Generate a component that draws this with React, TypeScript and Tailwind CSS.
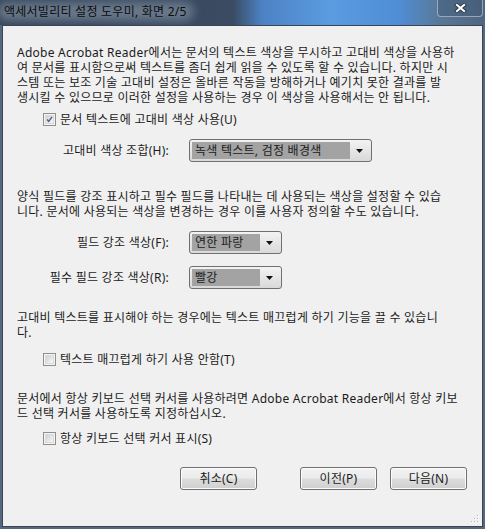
import React from 'react';

const font = "font-['Noto_Sans','Noto_Sans_CJK_KR',sans-serif]";

const Checkbox = ({ checked, label }: { checked?: boolean; label: string }) => (
  <div className="flex items-center h-[15px] pl-[26px]">
    <div className="w-[13px] h-[13px] border border-[#8e8f8f] bg-[#f4f4f4] p-[1px]">
      <div className="relative w-full h-full bg-[linear-gradient(135deg,#cdd1d6,#f7f7f7)] border border-[#dadada]">
        {checked && (
          <svg viewBox="0 0 9 9" className="absolute inset-0 w-full h-full">
            <path d="M1.5 4.5 L3.5 7 L7.8 1.2" fill="none" stroke="#4b5f86" strokeWidth="1.7" />
          </svg>
        )}
      </div>
    </div>
    <span className="ml-[4px] whitespace-nowrap">{label}</span>
  </div>
);

const Select = ({ value, width }: { value: string; width: string }) => (
  <div className={`flex h-[23px] ${width} rounded-[3px] border border-[#707070] bg-[linear-gradient(#f3f3f3,#e6e6e6_50%,#d9d9d9)] p-[2px]`}>
    <div className="flex-1 bg-[#a3a3a3] flex items-center pl-[3px] whitespace-nowrap">{value}</div>
    <div className="w-[19px] flex items-center justify-center">
      <svg width="7" height="4" viewBox="0 0 7 4">
        <path d="M0 0 H7 L3.5 4 Z" fill="#111" />
      </svg>
    </div>
  </div>
);

const FieldRow = ({ label, children }: { label: string; children: React.ReactNode }) => (
  <div className="flex items-center">
    <div className="w-[152px] text-right whitespace-nowrap">{label}</div>
    <div className="ml-[20px]">{children}</div>
  </div>
);

const Button = ({ label }: { label: string }) => (
  <button className="w-[77px] h-[23px] rounded-[3px] border border-[#707070] bg-[linear-gradient(#f2f2f2_0%,#ebebeb_48%,#dddddd_52%,#cfcfcf_100%)] text-[12px] text-[#1b1b1b] shadow-[inset_0_0_0_1px_#fcfcfc]">
    {label}
  </button>
);

export default function App() {
  return (
    <div className={`${font} w-[485px] h-[529px] flex flex-col bg-[#56687d] text-[12px] leading-[15px] tracking-[0.25px] text-[#1b1b1b]`}>
      {/* Title bar */}
      <div className="relative h-[25px] flex items-start bg-[linear-gradient(90deg,#34445a_0%,#3a4b62_48%,#4c82c4_54%,#5b9be0_68%,#4f8ed6_82%,#5a7796_91%,#4f6580_100%)]">
        <div className="relative mt-[4px] ml-[3px] px-[1px]">
          <div className="absolute -inset-x-[6px] -inset-y-[2px] rounded-full bg-[#9aa7b6]/50 blur-[5px]" />
          <span className="relative whitespace-nowrap text-[#0d0d0d]">액세서빌리티 설정 도우미, 화면 2/5</span>
        </div>
        <div className="absolute right-[2px] top-0 w-[46px] h-[17px] rounded-b-[4px] border border-t-0 border-[#b8c4d4]/70 bg-[#3b5470]/40 flex items-center justify-center">
          <svg width="13" height="10" viewBox="0 0 13 10">
            <path d="M3 2 L10 8 M10 2 L3 8" stroke="#2a3644" strokeWidth="4" strokeLinecap="square" />
            <path d="M3 2 L10 8 M10 2 L3 8" stroke="#ffffff" strokeWidth="2.2" strokeLinecap="square" />
          </svg>
        </div>
      </div>

      {/* Client area */}
      <div className="relative flex-1 mx-[2px] mb-[2px] border border-[#3b4450] bg-[#f0f0f0] pl-[14px] pt-[19px]">
        <p>
          <span className="block whitespace-nowrap">Adobe Acrobat Reader에서는 문서의 텍스트 색상을 무시하고 고대비 색상을 사용하</span>
          <span className="block whitespace-nowrap">여 문서를 표시함으로써 텍스트를 좀더 쉽게 읽을 수 있도록 할 수 있습니다. 하지만 시</span>
          <span className="block whitespace-nowrap">스템 또는 보조 기술 고대비 설정은 올바른 작동을 방해하거나 예기치 못한 결과를 발</span>
          <span className="block whitespace-nowrap">생시킬 수 있으므로 이러한 설정을 사용하는 경우 이 색상을 사용해서는 안 됩니다.</span>
        </p>

        <div className="mt-[7px]">
          <Checkbox checked label="문서 텍스트에 고대비 색상 사용(U)" />
        </div>

        <div className="mt-[12px]">
          <FieldRow label="고대비 색상 조합(H):">
            <Select value="녹색 텍스트, 검정 배경색" width="w-[183px]" />
          </FieldRow>
        </div>

        <p className="mt-[27px]">
          <span className="block whitespace-nowrap">양식 필드를 강조 표시하고 필수 필드를 나타내는 데 사용되는 색상을 설정할 수 있습</span>
          <span className="block whitespace-nowrap">니다. 문서에 사용되는 색상을 변경하는 경우 이를 사용자 정의할 수도 있습니다.</span>
        </p>

        <div className="mt-[12px]">
          <FieldRow label="필드 강조 색상(F):">
            <Select value="연한 파랑" width="w-[93px]" />
          </FieldRow>
        </div>
        <div className="mt-[12px]">
          <FieldRow label="필수 필드 강조 색상(R):">
            <Select value="빨강" width="w-[93px]" />
          </FieldRow>
        </div>

        <p className="mt-[21px]">
          <span className="block whitespace-nowrap">고대비 텍스트를 표시해야 하는 경우에는 텍스트 매끄럽게 하기 기능을 끌 수 있습니</span>
          <span className="block whitespace-nowrap">다.</span>
        </p>

        <div className="mt-[12px]">
          <Checkbox label="텍스트 매끄럽게 하기 사용 안함(T)" />
        </div>

        <p className="mt-[24px]">
          <span className="block whitespace-nowrap">문서에서 항상 키보드 선택 커서를 사용하려면 Adobe Acrobat Reader에서 항상 키보</span>
          <span className="block whitespace-nowrap">드 선택 커서를 사용하도록 지정하십시오.</span>
        </p>

        <div className="mt-[10px]">
          <Checkbox label="항상 키보드 선택 커서 표시(S)" />
        </div>

        <div className="mt-[21px] flex pr-[15px]">
          <div className="ml-[163px]">
            <Button label="취소(C)" />
          </div>
          <div className="ml-auto flex gap-[13px]">
            <Button label="이전(P)" />
            <Button label="다음(N)" />
          </div>
        </div>

        {/* resize grip */}
        <svg className="absolute right-[2px] bottom-[2px]" width="10" height="10" viewBox="0 0 10 10">
          {[[8, 2], [5, 5], [8, 5], [2, 8], [5, 8], [8, 8]].map(([x, y], i) => (
            <g key={i}>
              <rect x={x} y={y} width="1" height="1" fill="#ffffff" />
              <rect x={x - 1} y={y - 1} width="1" height="1" fill="#b8b8b8" />
            </g>
          ))}
        </svg>
      </div>
    </div>
  );
}
